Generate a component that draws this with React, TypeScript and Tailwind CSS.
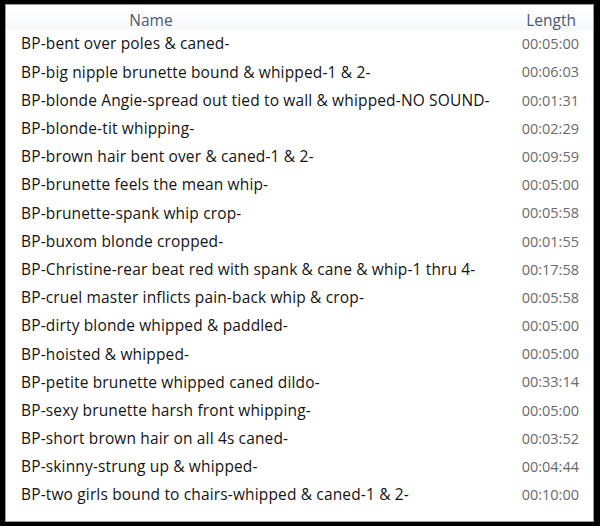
import React from "react"

const rows: [string, string][] = [
  ["BP-bent over poles & caned-", "00:05:00"],
  ["BP-big nipple brunette bound & whipped-1 & 2-", "00:06:03"],
  ["BP-blonde Angie-spread out tied to wall & whipped-NO SOUND-", "00:01:31"],
  ["BP-blonde-tit whipping-", "00:02:29"],
  ["BP-brown hair bent over & caned-1 & 2-", "00:09:59"],
  ["BP-brunette feels the mean whip-", "00:05:00"],
  ["BP-brunette-spank whip crop-", "00:05:58"],
  ["BP-buxom blonde cropped-", "00:01:55"],
  ["BP-Christine-rear beat red with spank & cane & whip-1 thru 4-", "00:17:58"],
  ["BP-cruel master inflicts pain-back whip & crop-", "00:05:58"],
  ["BP-dirty blonde whipped & paddled-", "00:05:00"],
  ["BP-hoisted & whipped-", "00:05:00"],
  ["BP-petite brunette whipped caned dildo-", "00:33:14"],
  ["BP-sexy brunette harsh front whipping-", "00:05:00"],
  ["BP-short brown hair on all 4s caned-", "00:03:52"],
  ["BP-skinny-strung up & whipped-", "00:04:44"],
  ["BP-two girls bound to chairs-whipped & caned-1 & 2-", "00:10:00"],
]

const App = () => {
  return (
    <div className="w-[600px] h-[526px] bg-black pt-[4px] pl-[5px] pr-[6px] pb-[4px] font-['Open_Sans',sans-serif]">
      <div className="w-full h-full bg-white border border-[#9a9a9a] flex flex-col">
        <div className="h-[25px] shrink-0 flex items-center pt-[7px] text-[15.5px] text-[#4c5a70] bg-gradient-to-b from-white to-[#f7f8fa]">
          <div className="w-[290px] text-center">Name</div>
          <div className="flex-1 text-right pr-[17px]">Length</div>
        </div>
        {rows.map(([name, len], i) => (
          <div key={i} className="h-[28.2px] flex items-center shrink-0">
            <div className="flex-1 pl-[15px] text-[15.5px] tracking-[0.15px] text-[#141414] whitespace-nowrap overflow-hidden">{name}</div>
            <div className="w-[90px] text-right pr-[14px] text-[14.5px] text-[#6a6a6a]">{len}</div>
          </div>
        ))}
      </div>
    </div>
  )
}

export default App
